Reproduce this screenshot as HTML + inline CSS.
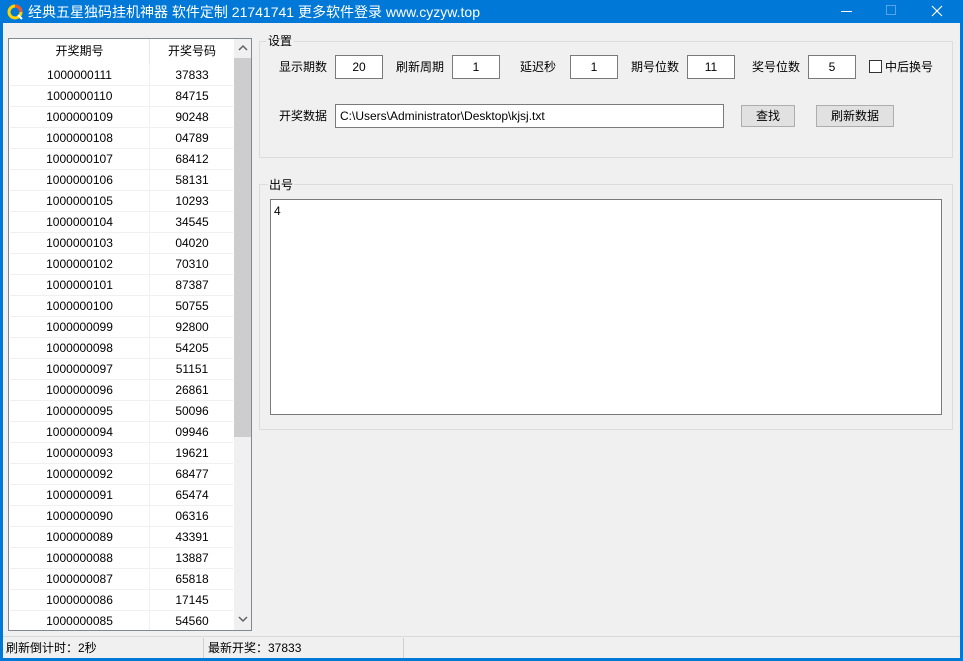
<!DOCTYPE html><html><head><meta charset="utf-8"><style>
*{margin:0;padding:0;box-sizing:border-box}
body{width:963px;height:661px;overflow:hidden;background:#0078d7;font-family:"Liberation Sans","Noto Sans CJK SC",sans-serif;font-size:12px;color:#000;position:relative}
.abs{position:absolute}
#title{left:0;top:0;width:963px;height:23px;background:#0078d7;color:#fff;font-size:13px}
#client{left:3px;top:23px;width:957px;height:635px;background:#f0f0f0}
.in{position:absolute;background:#fff;border:1px solid #7a7a7a;text-align:center;line-height:22px;height:24px}
.lbl{position:absolute;line-height:16px}
.btn{position:absolute;background:#e1e1e1;border:1px solid #adadad;text-align:center;line-height:20px;height:22px}
.grp{position:absolute;border:1px solid #dcdcdc}
.row{position:absolute;left:1px;width:223px;height:21px;border-bottom:1px solid #f0f0f0;line-height:21px}
.row span{position:absolute;text-align:center}
.c1{left:0;width:140px;border-right:1px solid #f0f0f0;height:21px}
.c2{left:142px;width:80px}
</style></head><body>
<div class="abs" id="title">
<svg class="abs" style="left:7px;top:4px" width="16" height="16"><circle cx="8" cy="8" r="6" fill="none" stroke="#ffd400" stroke-width="3"/><path d="M8 2a6 6 0 0 1 6 6" stroke="#e53" stroke-width="3" fill="none"/><path d="M11 11l4 4" stroke="#fff" stroke-width="2"/></svg>
<div class="abs" style="left:28px;top:2px;font-size:14px">经典五星独码挂机神器 软件定制 21741741 更多软件登录 www.cyzyw.top</div>
<div class="abs" style="left:841px;top:11px;width:11px;height:1px;background:#fff"></div>
<div class="abs" style="left:886px;top:5px;width:10px;height:10px;border:1px solid #5aa3e8"></div>
<svg class="abs" style="left:931px;top:5px" width="12" height="12"><path d="M1 1L11 11M11 1L1 11" stroke="#fff" stroke-width="1.2"/></svg>
</div>
<div class="abs" id="client"></div>
<div class="abs" style="left:8px;top:38px;width:244px;height:593px;background:#fff;border:1px solid #828790;overflow:hidden">
<div class="abs" style="left:1px;top:0;width:223px;height:25px;line-height:25px">
<span class="abs" style="left:0;width:140px;text-align:center;border-right:1px solid #e5e5e5;height:25px">开奖期号</span>
<span class="abs" style="left:142px;width:80px;text-align:center">开奖号码</span></div>
<div id="rows"></div>
<div class="abs" style="left:225px;top:0;width:17px;height:591px;background:#f0f0f0"></div>
<div class="abs" style="left:225px;top:19px;width:17px;height:379px;background:#cdcdcd"></div>
<svg class="abs" style="left:229px;top:5px" width="10" height="8"><path d="M1 6L5 2L9 6" stroke="#606060" stroke-width="1.5" fill="none"/></svg>
<svg class="abs" style="left:229px;top:576px" width="10" height="8"><path d="M1 2L5 6L9 2" stroke="#606060" stroke-width="1.5" fill="none"/></svg>
</div>
<div class="grp" style="left:259px;top:41px;width:694px;height:117px"></div>
<div class="lbl" style="left:266px;top:33px;background:#f0f0f0;padding:0 2px">设置</div>
<div class="lbl" style="left:279px;top:59px">显示期数</div><div class="in" style="left:335px;top:55px;width:48px">20</div>
<div class="lbl" style="left:396px;top:59px">刷新周期</div><div class="in" style="left:452px;top:55px;width:48px">1</div>
<div class="lbl" style="left:520px;top:59px">延迟秒</div><div class="in" style="left:570px;top:55px;width:48px">1</div>
<div class="lbl" style="left:631px;top:59px">期号位数</div><div class="in" style="left:687px;top:55px;width:48px">11</div>
<div class="lbl" style="left:752px;top:59px">奖号位数</div><div class="in" style="left:808px;top:55px;width:48px">5</div>
<div class="abs" style="left:869px;top:60px;width:13px;height:13px;border:1px solid #333;background:#fff"></div>
<div class="lbl" style="left:885px;top:59px">中后换号</div>
<div class="lbl" style="left:279px;top:108px">开奖数据</div>
<div class="in" style="left:335px;top:104px;width:389px;text-align:left;padding-left:4px">C:\Users\Administrator\Desktop\kjsj.txt</div>
<div class="btn" style="left:741px;top:105px;width:54px">查找</div>
<div class="btn" style="left:816px;top:105px;width:78px">刷新数据</div>
<div class="grp" style="left:259px;top:184px;width:694px;height:246px"></div>
<div class="lbl" style="left:268px;top:177px;background:#f0f0f0;padding:0 1px">出号</div>
<div class="abs" style="left:270px;top:199px;width:672px;height:216px;background:#fff;border:1px solid #7a7a7a;padding:3px 3px;line-height:16px">4</div>
<div class="abs" style="left:3px;top:636px;width:957px;height:1px;background:#d9d9d9"></div>
<div class="lbl" style="left:6px;top:640px">刷新倒计时：2秒</div>
<div class="abs" style="left:203px;top:638px;width:1px;height:20px;background:#d0d0d0"></div>
<div class="lbl" style="left:208px;top:640px">最新开奖：37833</div>
<div class="abs" style="left:403px;top:638px;width:1px;height:20px;background:#d0d0d0"></div>
<script>
var d=[37833,84715,90248,"04789",68412,58131,10293,34545,"04020",70310,87387,50755,92800,54205,51151,26861,50096,"09946",19621,68477,65474,"06316",43391,13887,65818,17145,54560];
var h="";for(var i=0;i<d.length;i++){h+='<div class="row" style="top:'+(26+21*i)+'px"><span class="c1">'+(1000000111-i)+'</span><span class="c2">'+d[i]+'</span></div>';}
document.getElementById("rows").innerHTML=h;
</script>
</body></html>
